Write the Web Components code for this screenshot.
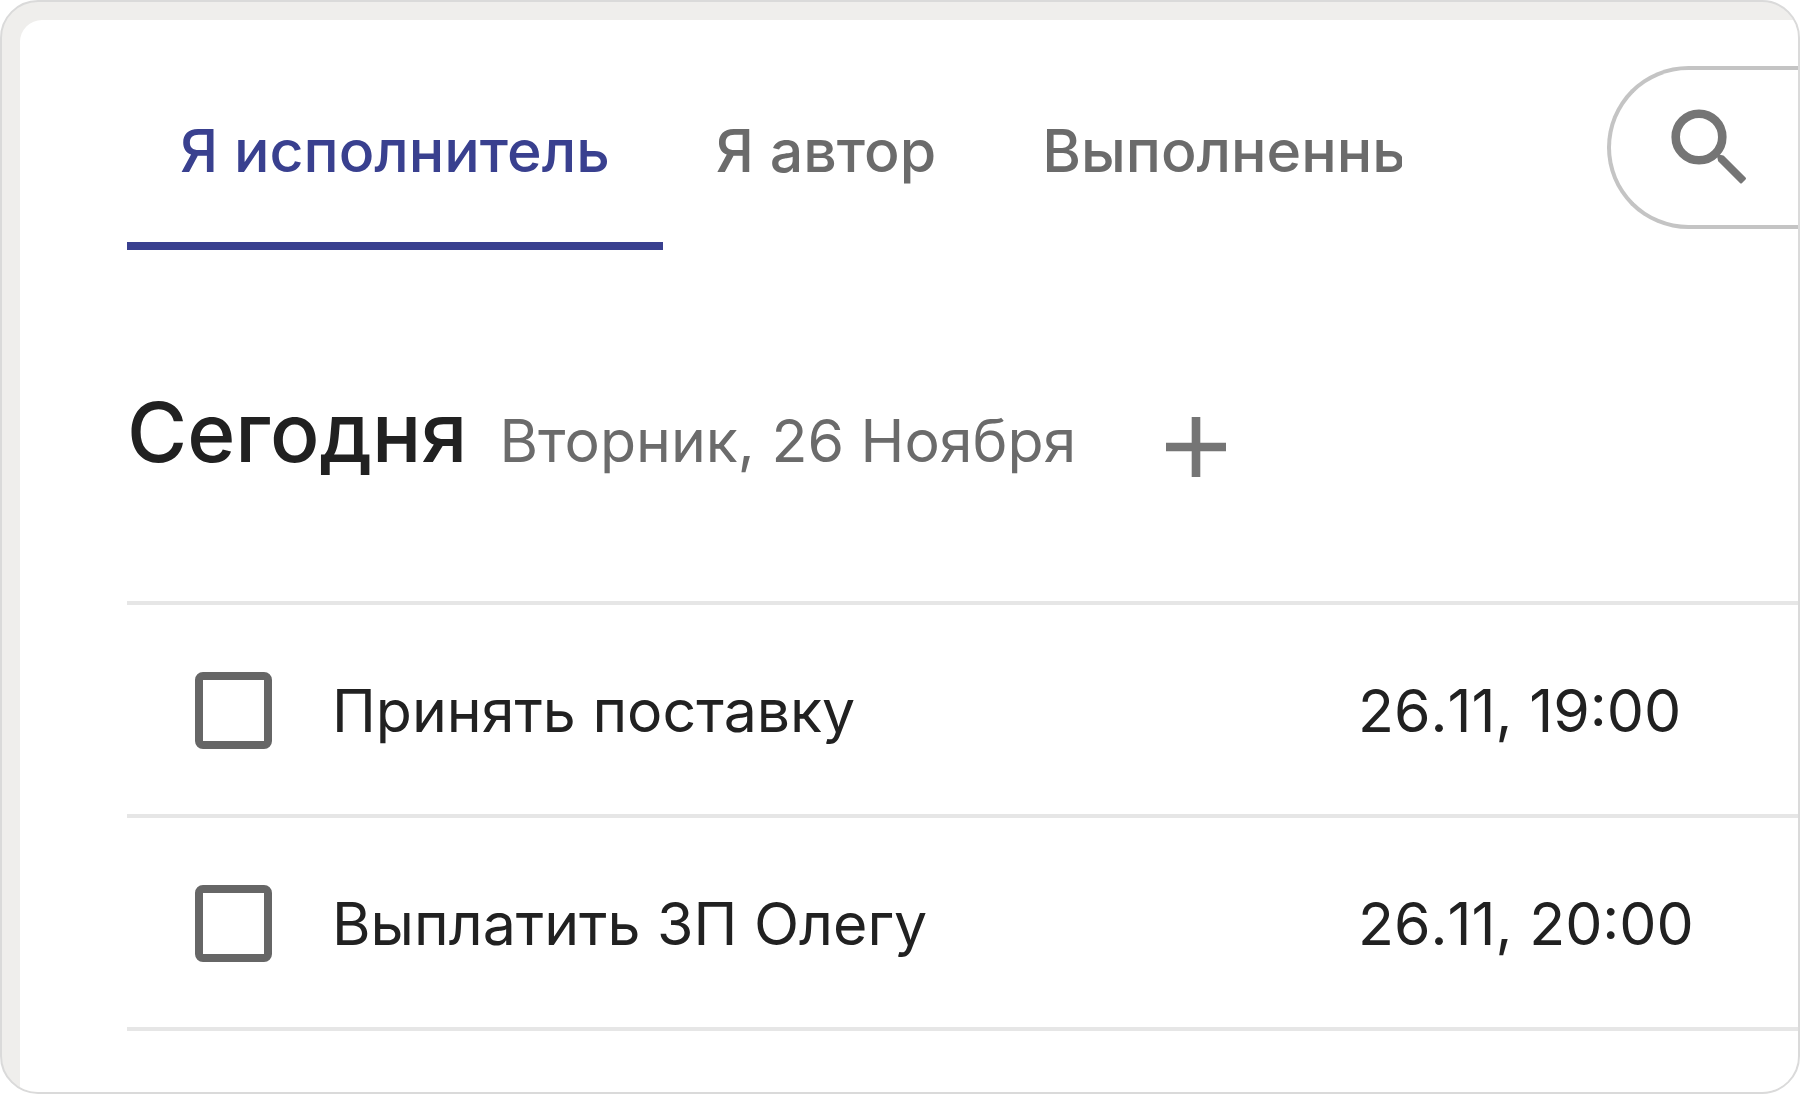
<!DOCTYPE html>
<html lang="ru">
<head>
<meta charset="utf-8">
<meta name="viewport" content="width=device-width, initial-scale=1">
<title>Задачи</title>
<style>
  body { margin: 0; background: #fff; font-family: Inter, "Liberation Sans", sans-serif; color: #212121; }
</style>
</head>
<body>
<task-frame>
  <task-toolbar>
    <task-tab active>Я исполнитель</task-tab>
    <task-tab>Я автор</task-tab>
    <task-tab>Выполненные</task-tab>
    <task-search slot="search"></task-search>
  </task-toolbar>
  <task-heading>Сегодня<span slot="date">Вторник, 26 Ноября</span></task-heading>
  <task-list>
    <task-item>Принять поставку<time slot="due">26.11, 19:00</time></task-item>
    <task-item>Выплатить ЗП Олегу<time slot="due">26.11, 20:00</time></task-item>
  </task-list>
</task-frame>

<script>
const define = (name, html, setup) => {
  const template = document.createElement('template');
  template.innerHTML = html;
  customElements.define(name, class extends HTMLElement {
    constructor() {
      super();
      this.attachShadow({ mode: 'open' }).append(template.content.cloneNode(true));
    }
    connectedCallback() { if (setup) setup(this); }
  });
};

define('task-frame', `
  <style>
    :host { display: flex; box-sizing: border-box; min-height: 100vh; overflow: hidden;
      border: 2px solid #dadada; border-radius: 38px; background: #efeeec; padding: 18px 0 0 18px; }
    main { flex: 1; min-width: 0; background: #fff; border-top-left-radius: 22px; padding: 46px 0 0 107px; }
  </style>
  <main><slot></slot></main>
`);

define('task-toolbar', `
  <style>
    :host { display: flex; align-items: flex-start; gap: 205px; }
    nav { flex: 1; min-width: 0; display: flex; overflow: hidden; }
  </style>
  <nav aria-label="Задачи"><slot></slot></nav>
  <slot name="search"></slot>
`);

define('task-tab', `
  <style>
    :host { display: block; flex: none; }
    button { display: block; box-sizing: border-box; height: 184px; margin: 0; padding: 0 53px 6px;
      border: 0; border-bottom: 8px solid transparent; background: none; font: 500 59px/72px Inter, sans-serif;
      color: #6b6b6b; white-space: nowrap; cursor: pointer; }
    :host([active]) button { color: #39408f; border-bottom-color: #39408f; }
  </style>
  <button type="button"><slot></slot></button>
`);

define('task-search', `
  <style>
    :host { display: block; flex: 0 0 191px; overflow: hidden; }
    label { display: flex; align-items: center; box-sizing: border-box; height: 163px; padding-left: 46px;
      border: 4px solid #c4c4c4; border-right: 0; border-radius: 82px 0 0 82px; }
    svg { flex: none; width: 104px; height: 104px; }
    input { flex: 1; min-width: 0; border: 0; outline: 0; padding: 0; background: none; font: 400 59px/72px Inter, sans-serif; }
  </style>
  <label>
    <svg viewBox="0 0 104 104" aria-hidden="true">
      <circle cx="42" cy="41" r="23.3" fill="none" stroke="#757575" stroke-width="8.6"/>
      <path d="M61.500 60 L66 61 L87.500 82.500 L84 86 L62.500 64.500 Z" fill="#757575" stroke="#757575" stroke-width="3" stroke-linejoin="round"/>
    </svg>
    <input type="search" aria-label="Поиск">
  </label>
`);

define('task-heading', `
  <style>
    :host { display: block; }
    header { display: flex; align-items: center; height: 351px; box-sizing: border-box; padding-top: 14px; }
    .title { display: flex; align-items: baseline; gap: 32px; white-space: nowrap; }
    h1 { margin: 0; font: 500 82px/104px Inter, sans-serif; }
    .date { font: 400 59px/72px Inter, sans-serif; color: #6b6b6b; }
    button { flex: none; display: block; margin: 28px 0 0 68px; padding: 0; border: 0; background: none; cursor: pointer; }
    svg { display: block; width: 104px; height: 104px; }
  </style>
  <header>
    <div class="title"><h1><slot></slot></h1><span class="date"><slot name="date"></slot></span></div>
    <button type="button" aria-label="Добавить задачу">
      <svg viewBox="0 0 104 104" aria-hidden="true"><path d="M52 22V82M22 52H82" fill="none" stroke="#757575" stroke-width="8.600"/></svg>
    </button>
  </header>
`);

define('task-list', `
  <style>
    :host { display: block; border-top: 4px solid #e6e6e6; }
  </style>
  <div role="list"><slot></slot></div>
`);

define('task-item', `
  <style>
    :host { display: flex; align-items: center; box-sizing: border-box; height: 213px; padding: 2px 0 0 68px;
      border-bottom: 4px solid #e6e6e6; font: 400 59px/72px Inter, sans-serif; white-space: nowrap; }
    label { flex: 1; min-width: 0; display: flex; align-items: center; gap: 60px; }
    input { appearance: none; flex: none; box-sizing: border-box; width: 77px; height: 77px; margin: 0;
      border: 8px solid #666; border-radius: 8px; background: #fff; }
    input:checked { background: #39408f; border-color: #39408f; }
    .due { flex: 0 0 440px; font-kerning: none; }
  </style>
  <label><input type="checkbox"><span><slot></slot></span></label>
  <span class="due"><slot name="due"></slot></span>
`, el => el.setAttribute('role', 'listitem'));
</script>
</body>
</html>
